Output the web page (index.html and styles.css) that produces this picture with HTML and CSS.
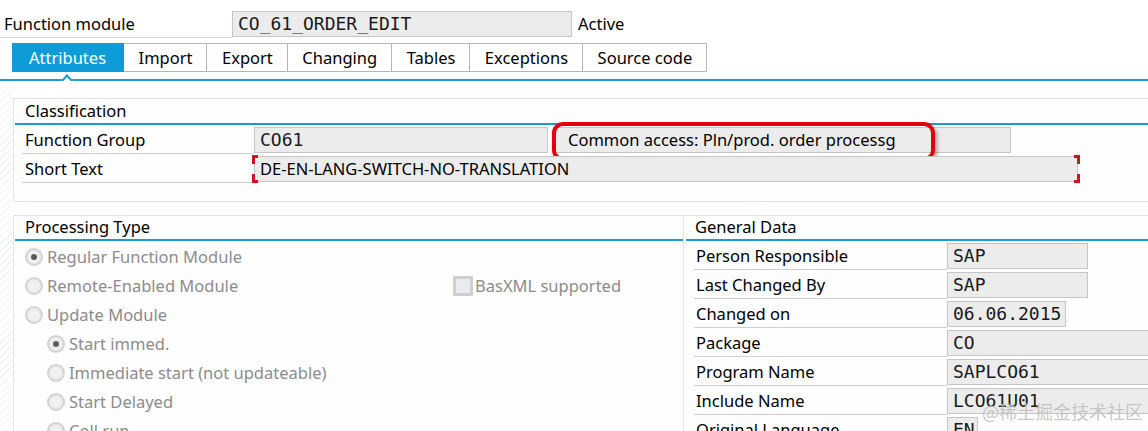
FILE: index.html
```html
<!DOCTYPE html>
<html lang="en">
<head>
<meta charset="utf-8">
<title>Function module CO_61_ORDER_EDIT</title>
<link rel="stylesheet" href="styles.css">
</head>
<body>
<div class="header">
  <div class="hlabel">Function module</div>
  <div class="field mono fm-name">CO_61_ORDER_EDIT</div>
  <div class="status">Active</div>
</div>

<div class="tabs">
  <div class="tab active">Attributes</div>
  <div class="tab">Import</div>
  <div class="tab">Export</div>
  <div class="tab">Changing</div>
  <div class="tab">Tables</div>
  <div class="tab">Exceptions</div>
  <div class="tab">Source code</div>
</div>
<div class="tabline"><span class="notch"></span></div>

<div class="content">
  <section class="group classification">
    <div class="gtitle">Classification</div>
    <div class="row">
      <div class="lbl">Function Group</div>
      <div class="field mono w-fg">CO61</div>
      <div class="field w-desc">Common access: Pln/prod. order processg</div>
      <div class="highlight"></div>
    </div>
    <div class="row">
      <div class="lbl">Short Text</div>
      <div class="field req w-short">DE-EN-LANG-SWITCH-NO-TRANSLATION</div>
    </div>
  </section>

  <div class="cols">
    <section class="group ptype">
      <div class="gtitle short">Processing Type</div>
      <div class="opt"><span class="radio on"></span><span>Regular Function Module</span></div>
      <div class="opt split">
        <div class="item"><span class="radio"></span><span>Remote-Enabled Module</span></div>
        <div class="item"><span class="check"></span><span>BasXML supported</span></div>
      </div>
      <div class="opt"><span class="radio"></span><span>Update Module</span></div>
      <div class="opt sub"><span class="radio on"></span><span>Start immed.</span></div>
      <div class="opt sub"><span class="radio"></span><span>Immediate start (not updateable)</span></div>
      <div class="opt sub"><span class="radio"></span><span>Start Delayed</span></div>
      <div class="opt sub"><span class="radio"></span><span>Coll.run</span></div>
    </section>

    <section class="group gdata">
      <div class="gtitle short">General Data</div>
      <div class="grow"><div class="glbl">Person Responsible</div><div class="field mono w-sap">SAP</div></div>
      <div class="grow"><div class="glbl">Last Changed By</div><div class="field mono w-sap">SAP</div></div>
      <div class="grow"><div class="glbl">Changed on</div><div class="field mono w-date">06.06.2015</div></div>
      <div class="grow"><div class="glbl">Package</div><div class="field mono w-long">CO</div></div>
      <div class="grow"><div class="glbl">Program Name</div><div class="field mono w-long">SAPLCO61</div></div>
      <div class="grow"><div class="glbl">Include Name</div><div class="field mono w-long">LCO61U01</div></div>
      <div class="grow"><div class="glbl">Original Language</div><div class="field mono w-lang">EN</div></div>
    </section>
  </div>

  <div class="watermark">@稀土掘金技术社区</div>
</div>
</body>
</html>
```

FILE: styles.css
```css
html, body {
  margin: 0;
  padding: 0;
}

body {
  width: 1148px;
  height: 431px;
  overflow: hidden;
  background: #ffffff;
  color: #000000;
  font-family: "Noto Sans", "Liberation Sans", sans-serif;
  font-size: 16.5px;
}

/* ---------- header ---------- */
.header {
  display: flex;
  height: 38px;
}

.hlabel {
  box-sizing: border-box;
  width: 232px;
  height: 38px;
  padding: 11px 0 0 4px;
  line-height: 26px;
  border-bottom: 1px solid #d6d6d6;
}

.field {
  box-sizing: border-box;
  height: 26px;
  line-height: 24px;
  padding-left: 5px;
  background: #ececec;
  border: 1px solid #c6c6c6;
  white-space: nowrap;
  overflow: hidden;
  flex: none;
}

.mono {
  font-family: "DejaVu Sans Mono", "Liberation Mono", monospace;
  font-size: 18px;
  color: #1a1a1a;
}

.fm-name {
  margin-top: 11px;
  width: 340px;
}

.status {
  margin-top: 11px;
  line-height: 26px;
  padding-left: 6px;
}

/* ---------- tabs ---------- */
.tabs {
  display: flex;
  margin: 5px 0 0 12px;
  height: 29px;
}

.tab {
  box-sizing: border-box;
  height: 29px;
  line-height: 27px;
  padding: 0 14px 0 14.5px;
  border: 1px solid #b6b6b6;
  border-left: none;
  background: #ffffff;
  white-space: nowrap;
}

.tab.active {
  padding: 0 17px;
  background: #0e9cd9;
  border-color: #0e9cd9;
  color: #ffffff;
}

.tabline {
  position: relative;
  height: 2px;
  margin-top: 7px;
  background: #1b9bd1;
}

.notch {
  position: absolute;
  left: 63px;
  top: -3px;
  width: 6px;
  height: 6px;
  background: #ffffff;
  border-left: 2px solid #1b9bd1;
  border-top: 2px solid #1b9bd1;
  transform: rotate(45deg);
}

/* ---------- content ---------- */
.content {
  position: relative;
  box-sizing: border-box;
  padding: 17px 0 0 13px;
  height: 350px;
  overflow: hidden;
  background:
    repeating-linear-gradient(135deg, #eef2f6 0 1px, #ffffff 1px 5px) 0 0 / 12px 100% no-repeat,
    #ffffff;
}

.group {
  border: 1px solid #e2e4e6;
  background: #fefefe;
}

.gtitle {
  height: 24px;
  line-height: 24px;
  margin-left: 1px;
  padding-left: 10px;
  border-bottom: 2px solid #1b9bd1;
}

.gtitle.short {
  height: 23px;
  line-height: 22px;
}

.classification {
  margin-right: -12px;
  padding-bottom: 18px;
}

.row {
  position: relative;
  display: flex;
  height: 29px;
  margin-left: 8px;
}

.lbl {
  box-sizing: border-box;
  width: 232px;
  height: 29px;
  line-height: 29px;
  padding-left: 3px;
  border-bottom: 1px solid #cfcfcf;
  flex: none;
}

.row .field {
  margin-top: 2px;
}

.w-fg { width: 294px; }
.w-desc { width: 458px; margin-left: 5px; padding-left: 14px; }
.w-short { width: 824px; }

.req {
  position: relative;
  overflow: visible;
}

.req::before,
.req::after {
  content: "";
  position: absolute;
  top: -2px;
  bottom: -2px;
  width: 6px;
}

.req::before {
  left: -3px;
  background:
    linear-gradient(#d2131b, #d2131b) left top / 3px 9px no-repeat,
    linear-gradient(#d2131b, #d2131b) left bottom / 3px 9px no-repeat,
    linear-gradient(#d2131b, #d2131b) left top / 6px 3px no-repeat,
    linear-gradient(#d2131b, #d2131b) left bottom / 6px 3px no-repeat;
}

.req::after {
  right: -3px;
  background:
    linear-gradient(#d2131b, #d2131b) right top / 3px 9px no-repeat,
    linear-gradient(#d2131b, #d2131b) right bottom / 3px 9px no-repeat,
    linear-gradient(#d2131b, #d2131b) right top / 6px 3px no-repeat,
    linear-gradient(#d2131b, #d2131b) right bottom / 6px 3px no-repeat;
}

.highlight {
  position: absolute;
  left: 530px;
  top: -3px;
  width: 383px;
  height: 39px;
  box-sizing: border-box;
  border: 4px solid #e3000f;
  border-radius: 11px;
  box-shadow: 2px 3px 4px rgba(0, 0, 0, 0.35);
}

/* ---------- lower columns ---------- */
.cols {
  display: flex;
  margin-top: 13px;
  height: 260px;
}

.ptype {
  width: 671px;
  box-sizing: border-box;
  flex: none;
}

.gdata {
  flex: 1;
  margin-right: -12px;
  border-left: none;
}

.gdata .gtitle {
  margin-left: 2px;
  padding-left: 9px;
}

.opt {
  display: flex;
  align-items: center;
  height: 29px;
  padding: 2px 0 0 11px;
  box-sizing: border-box;
  color: #8c8c8c;
  white-space: nowrap;
}

.opt.sub {
  padding-left: 33px;
}

.opt.split {
  display: grid;
  grid-template-columns: 428px auto;
  align-items: center;
}

.item {
  display: flex;
  align-items: center;
}

.radio {
  position: relative;
  box-sizing: border-box;
  width: 18px;
  height: 18px;
  margin-right: 4px;
  border-radius: 50%;
  border: 2px solid #d3d3d3;
  background: radial-gradient(circle, #f1f1f1 0 40%, #e2e2e2 100%);
  flex: none;
}

.radio.on::after {
  content: "";
  position: absolute;
  left: 4px;
  top: 4px;
  width: 6px;
  height: 6px;
  border-radius: 50%;
  background: #5a5a5a;
}

.check {
  box-sizing: border-box;
  width: 20px;
  height: 20px;
  margin-right: 2px;
  border: 3px solid #cfcfcf;
  background: #e9ecef;
  flex: none;
}

.grow {
  display: flex;
  height: 29px;
  margin-left: 10px;
}

.glbl {
  box-sizing: border-box;
  width: 253px;
  height: 29px;
  line-height: 29px;
  padding-left: 2px;
  border-bottom: 1px solid #cfcfcf;
  flex: none;
  white-space: nowrap;
}

.grow .field {
  margin-top: 2px;
}

.w-sap { width: 141px; }
.w-date { width: 119px; }
.w-long { width: 220px; }
.w-lang { width: 31px; }

.watermark {
  position: absolute;
  left: 982px;
  top: 319px;
  font-family: "Noto Sans CJK SC", "Noto Sans", sans-serif;
  font-size: 18px;
  line-height: 22px;
  color: rgba(150, 150, 150, 0.55);
  text-shadow: 0 0 1px rgba(255, 255, 255, 0.8);
  white-space: nowrap;
}
```
